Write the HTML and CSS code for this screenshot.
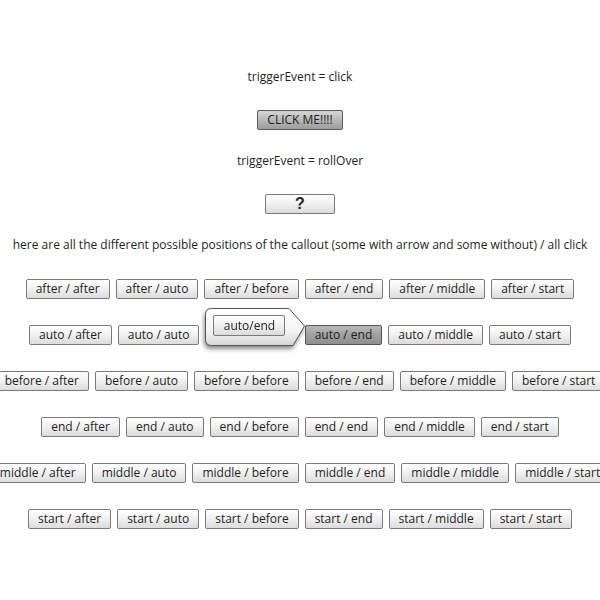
FILE: index.html
```html
<!DOCTYPE html>
<html>
<head>
<meta charset="utf-8">
<link rel="stylesheet" href="styles.css">
</head>
<body>
<div class="page">
  <div class="label first">triggerEvent = click</div>
  <button class="btn selected click-me">CLICK ME!!!!</button>
  <div class="label second">triggerEvent = rollOver</div>
  <button class="btn help">?</button>
  <div class="label desc">here are all the different possible positions of the callout (some with arrow and some without) / all click</div>

  <div class="grid">
    <div class="row">
      <button class="btn">after / after</button>
      <button class="btn">after / auto</button>
      <button class="btn">after / before</button>
      <button class="btn">after / end</button>
      <button class="btn">after / middle</button>
      <button class="btn">after / start</button>
    </div>
    <div class="row">
      <button class="btn">auto / after</button>
      <button class="btn">auto / auto</button>
      <div class="anchor">
        <button class="btn covered">auto / before</button>
        <div class="callout">
          <svg class="callout-shape" width="104" height="44" viewBox="0 0 104 44">
            <defs>
              <linearGradient id="cg" x1="0" y1="0" x2="0" y2="1">
                <stop offset="0" stop-color="#ffffff"/>
                <stop offset="0.6" stop-color="#f4f4f4"/>
                <stop offset="1" stop-color="#d6d6d6"/>
              </linearGradient>
            </defs>
            <path d="M6.5,0.5 H84 L99.5,18 L88,37.5 H6.5 Q0.5,37.5 0.5,31.5 V6.5 Q0.5,0.5 6.5,0.5 Z" fill="url(#cg)" stroke="#555" stroke-width="1"/>
          </svg>
          <button class="btn inner">auto/end</button>
        </div>
      </div>
      <button class="btn pressed">auto / end</button>
      <button class="btn">auto / middle</button>
      <button class="btn">auto / start</button>
    </div>
    <div class="row">
      <button class="btn">before / after</button>
      <button class="btn">before / auto</button>
      <button class="btn">before / before</button>
      <button class="btn">before / end</button>
      <button class="btn">before / middle</button>
      <button class="btn">before / start</button>
    </div>
    <div class="row">
      <button class="btn">end / after</button>
      <button class="btn">end / auto</button>
      <button class="btn">end / before</button>
      <button class="btn">end / end</button>
      <button class="btn">end / middle</button>
      <button class="btn">end / start</button>
    </div>
    <div class="row">
      <button class="btn">middle / after</button>
      <button class="btn">middle / auto</button>
      <button class="btn">middle / before</button>
      <button class="btn">middle / end</button>
      <button class="btn">middle / middle</button>
      <button class="btn">middle / start</button>
    </div>
    <div class="row">
      <button class="btn">start / after</button>
      <button class="btn">start / auto</button>
      <button class="btn">start / before</button>
      <button class="btn">start / end</button>
      <button class="btn">start / middle</button>
      <button class="btn">start / start</button>
    </div>
  </div>
</div>
</body>
</html>
```

FILE: styles.css
```css
html, body {
  margin: 0;
  padding: 0;
  background: #ffffff;
  overflow: hidden;
}

body {
  width: 600px;
  height: 600px;
  font-family: "Open Sans", "DejaVu Sans", sans-serif;
  font-size: 12px;
  color: #1e1e1e;
}

.page {
  display: flex;
  flex-direction: column;
  align-items: center;
  width: 600px;
}

.label {
  height: 16px;
  line-height: 16px;
  white-space: nowrap;
  text-align: center;
}

.first { margin-top: 69px; }
.second { margin-top: 23px; }
.desc { margin-top: 23px; }

.btn {
  box-sizing: border-box;
  height: 20px;
  padding: 0 9px;
  margin: 0;
  font-family: "Open Sans", "DejaVu Sans", sans-serif;
  font-size: 12px;
  line-height: 18px;
  color: #1e1e1e;
  white-space: nowrap;
  border: 1px solid #7a7a7a;
  border-radius: 2px;
  background: linear-gradient(#ffffff, #f2f2f2 45%, #dcdcdc);
  flex: none;
}

.click-me {
  margin-top: 25px;
  width: 86px;
  padding: 0;
}

.selected {
  background: linear-gradient(#d6d6d6, #b8b8b8 50%, #9c9c9c);
  border-color: #5a5a5a;
}

.help {
  margin-top: 25px;
  width: 70px;
  padding: 0;
  font-family: "Liberation Sans", Arial, sans-serif;
  font-weight: bold;
  font-size: 16px;
  line-height: 18px;
  color: #222;
}

.grid {
  margin-top: 26px;
  width: 600px;
  display: flex;
  flex-direction: column;
  gap: 26px;
}

.row {
  display: flex;
  justify-content: center;
  gap: 6px;
  width: 600px;
}

.pressed {
  background: linear-gradient(#bababa, #a0a0a0 50%, #8e8e8e);
  border-color: #555555;
}

.anchor {
  position: relative;
  display: flex;
}

.covered {
  visibility: hidden;
}

.callout {
  position: absolute;
  left: 0;
  top: -17px;
  width: 104px;
  height: 44px;
  filter: drop-shadow(-1px 3px 2px rgba(0, 0, 0, 0.45));
}

.callout-shape {
  display: block;
}

.inner {
  position: absolute;
  left: 8px;
  top: 7px;
  width: 72px;
  height: 21px;
  padding: 0;
}
```
